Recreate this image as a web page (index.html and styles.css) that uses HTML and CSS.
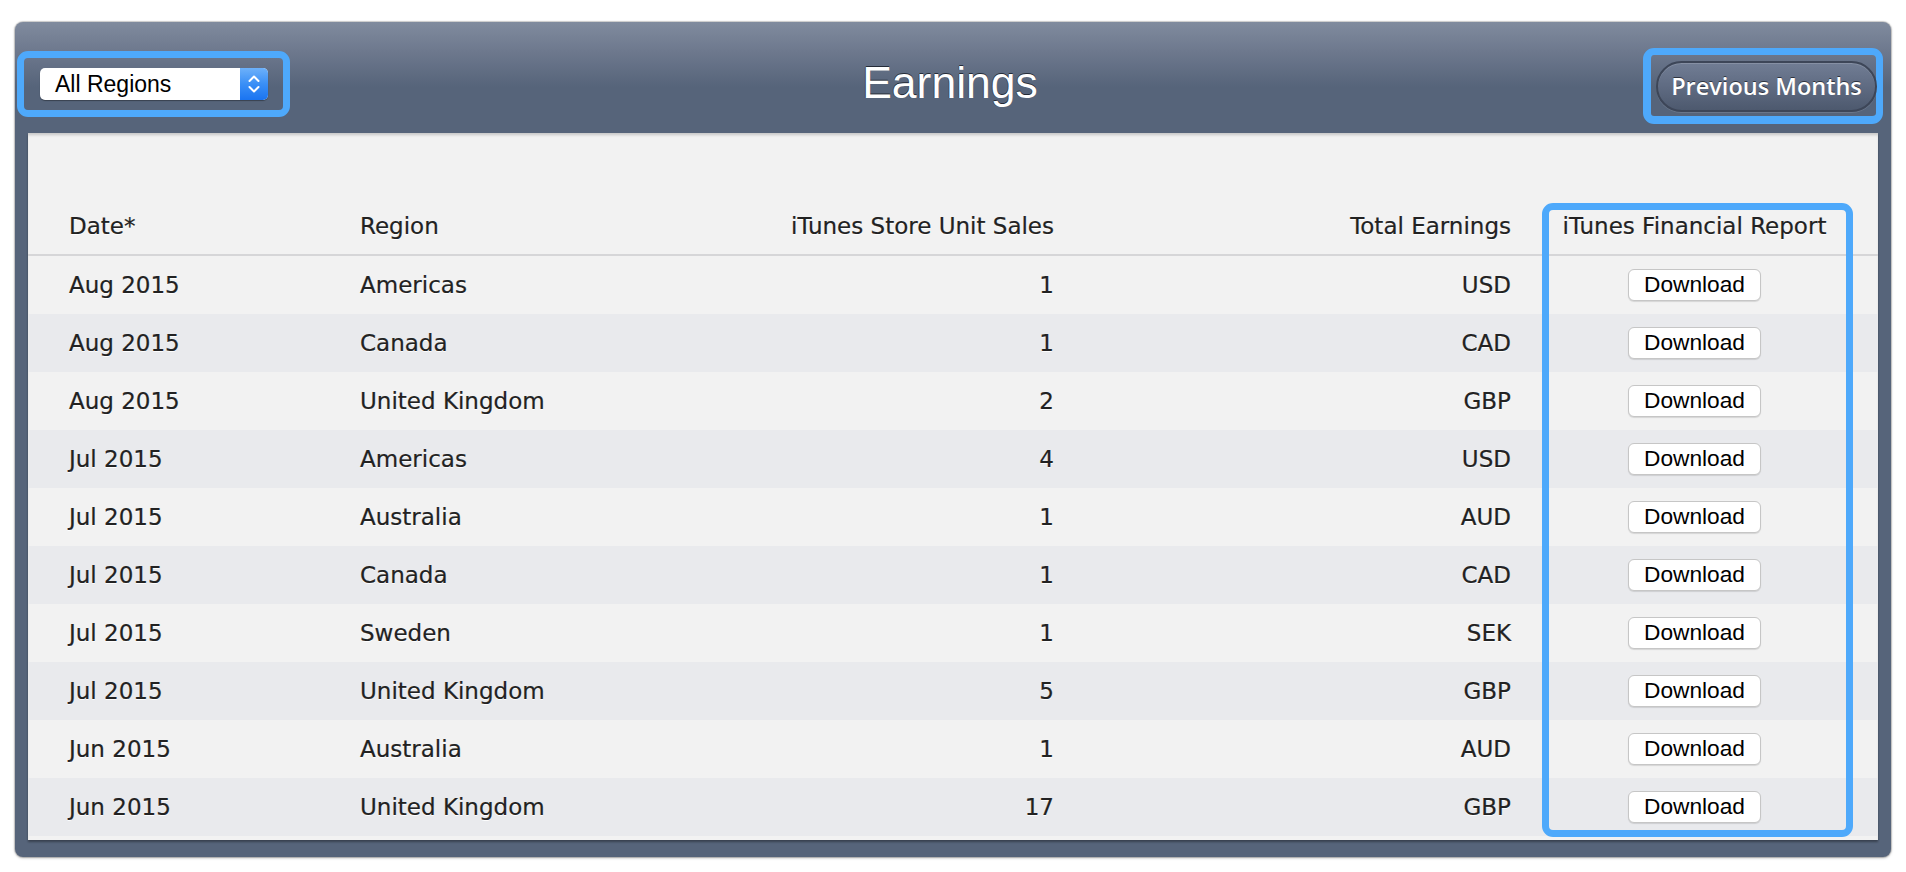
FILE: index.html
```html
<!DOCTYPE html>
<html>
<head>
<meta charset="utf-8">
<title>Earnings</title>
<link rel="stylesheet" href="styles.css">
</head>
<body>
<div class="window">
  <header class="topbar">
    <div class="hl hl-left">
      <div class="select">
        <span class="select-label">All Regions</span>
        <span class="select-arrows">
          <svg width="14" height="22" viewBox="0 0 14 22"><path d="M2.5 8 L7 3.5 L11.5 8" fill="none" stroke="#fff" stroke-width="2" stroke-linecap="round" stroke-linejoin="round"/><path d="M2.5 14 L7 18.5 L11.5 14" fill="none" stroke="#fff" stroke-width="2" stroke-linecap="round" stroke-linejoin="round"/></svg>
        </span>
      </div>
    </div>
    <h1 class="title">Earnings</h1>
    <div class="right-slot">
      <div class="hl hl-right">
        <button class="pill">Previous Months</button>
      </div>
    </div>
  </header>
  <section class="panel">
    <div class="row head">
      <div class="c c-date">Date*</div>
      <div class="c c-region">Region</div>
      <div class="c c-num">iTunes Store Unit Sales</div>
      <div class="c c-num">Total Earnings</div>
      <div class="c c-rep">iTunes Financial Report</div>
    </div>
    <div class="row"><div class="c c-date">Aug 2015</div><div class="c c-region">Americas</div><div class="c c-num">1</div><div class="c c-num">USD</div><div class="c c-rep"><button class="dl">Download</button></div></div>
    <div class="row"><div class="c c-date">Aug 2015</div><div class="c c-region">Canada</div><div class="c c-num">1</div><div class="c c-num">CAD</div><div class="c c-rep"><button class="dl">Download</button></div></div>
    <div class="row"><div class="c c-date">Aug 2015</div><div class="c c-region">United Kingdom</div><div class="c c-num">2</div><div class="c c-num">GBP</div><div class="c c-rep"><button class="dl">Download</button></div></div>
    <div class="row"><div class="c c-date">Jul 2015</div><div class="c c-region">Americas</div><div class="c c-num">4</div><div class="c c-num">USD</div><div class="c c-rep"><button class="dl">Download</button></div></div>
    <div class="row"><div class="c c-date">Jul 2015</div><div class="c c-region">Australia</div><div class="c c-num">1</div><div class="c c-num">AUD</div><div class="c c-rep"><button class="dl">Download</button></div></div>
    <div class="row"><div class="c c-date">Jul 2015</div><div class="c c-region">Canada</div><div class="c c-num">1</div><div class="c c-num">CAD</div><div class="c c-rep"><button class="dl">Download</button></div></div>
    <div class="row"><div class="c c-date">Jul 2015</div><div class="c c-region">Sweden</div><div class="c c-num">1</div><div class="c c-num">SEK</div><div class="c c-rep"><button class="dl">Download</button></div></div>
    <div class="row"><div class="c c-date">Jul 2015</div><div class="c c-region">United Kingdom</div><div class="c c-num">5</div><div class="c c-num">GBP</div><div class="c c-rep"><button class="dl">Download</button></div></div>
    <div class="row"><div class="c c-date">Jun 2015</div><div class="c c-region">Australia</div><div class="c c-num">1</div><div class="c c-num">AUD</div><div class="c c-rep"><button class="dl">Download</button></div></div>
    <div class="row"><div class="c c-date">Jun 2015</div><div class="c c-region">United Kingdom</div><div class="c c-num">17</div><div class="c c-num">GBP</div><div class="c c-rep"><button class="dl">Download</button></div></div>
    <div class="hl-report"></div>
  </section>
</div>
</body>
</html>
```

FILE: styles.css
```css
html, body {
  margin: 0;
  padding: 0;
  background: #ffffff;
}

body {
  font-family: "DejaVu Sans", "Liberation Sans", sans-serif;
}

.window {
  margin: 22px 15px 15px 15px;
  background: #56647a;
  border-radius: 8px;
  padding: 0 13px 17px 13px;
  box-shadow: 0 0 1px 1px rgba(0, 0, 0, 0.18), 0 1px 3px rgba(0, 0, 0, 0.25);
  background-image: linear-gradient(to bottom, #808b9e 0px, #6d788d 30px, #56647a 65px, #56647a 100%);
  background-repeat: no-repeat;
}

.topbar {
  display: grid;
  grid-template-columns: 1fr auto 1fr;
  align-items: start;
  height: 111px;
  box-sizing: border-box;
  padding-top: 26px;
  margin: 0 -5px 0 -11px;
}

.hl {
  border: 7px solid #4ea9fb;
  border-radius: 11px;
  box-sizing: border-box;
}

.hl-left {
  justify-self: start;
  margin-top: 3px;
  width: 273px;
  height: 66px;
  padding: 10px 15px 10px 16px;
}

.select {
  display: flex;
  height: 32px;
  border-radius: 5px;
  background: #ffffff;
  box-shadow: 0 1px 1px rgba(0, 0, 0, 0.35);
  overflow: hidden;
}

.select-label {
  flex: 1;
  font-family: "Liberation Sans", Arial, sans-serif;
  font-size: 23px;
  line-height: 33px;
  color: #000;
  padding-left: 15px;
}

.select-arrows {
  width: 28px;
  display: flex;
  align-items: center;
  justify-content: center;
  background: linear-gradient(to bottom, #6db1fa 0%, #3a8ff6 50%, #1a74f1 100%);
}

.title {
  margin: 10px 0 0 0;
  font-family: "Liberation Sans", Arial, sans-serif;
  font-weight: normal;
  font-size: 44.5px;
  line-height: 50px;
  color: #ffffff;
  text-shadow: 0 -1px 0 rgba(20, 25, 35, 0.8), -1px 0 0 rgba(20, 25, 35, 0.4);
}

.right-slot {
  display: flex;
  justify-content: flex-end;
}

.hl-right {
  width: 240px;
  height: 76px;
  padding: 6px 0 0 5px;
  border-width: 7px 7px 8px 8px;
}

.pill {
  display: block;
  width: 221px;
  height: 51px;
  margin: 0;
  border-radius: 26px;
  border: 2px solid #3d4658;
  background: linear-gradient(to bottom, #717d94 0%, #5f6b82 50%, #4d596e 100%);
  box-shadow: inset 0 1px 0 rgba(255, 255, 255, 0.15), 0 1px 0 rgba(255, 255, 255, 0.12);
  color: #ffffff;
  font-family: "Open Sans", "DejaVu Sans", sans-serif;
  font-weight: 600;
  font-size: 23.5px;
  padding: 0 0 2px 0;
  text-shadow: 0 -1px 0 rgba(0, 0, 0, 0.55);
}

.panel {
  position: relative;
  background: #f2f2f2;
  padding-bottom: 4px;
  box-shadow: inset 0 3px 3px -1px rgba(0, 0, 0, 0.18), 0 2px 2px rgba(0, 0, 0, 0.35);
}

.row {
  display: grid;
  grid-template-columns: 291px 400px 294px 457px 1fr;
  align-items: center;
  height: 58px;
  padding-left: 41px;
  font-size: 23px;
  line-height: 27px;
  color: #222222;
  text-shadow: 0 1px 0 rgba(255, 255, 255, 0.95);
  -webkit-text-stroke: 0.2px #222222;
}

.row:nth-child(odd) {
  background: #e9eaed;
}

.row.head {
  align-items: end;
  padding-bottom: 14px;
  box-sizing: border-box;
  border-bottom: 2px solid #d6d6d8;
  background: transparent;
  height: 123px;
}

.c-num {
  text-align: right;
}

.c-rep {
  text-align: center;
}

.dl {
  width: 133px;
  height: 32px;
  margin: 0;
  padding: 0 0 1px 0;
  background: #ffffff;
  border: 1px solid #c6c6c6;
  border-radius: 6px;
  box-shadow: 0 1px 1px rgba(0, 0, 0, 0.12);
  font-family: "Liberation Sans", Arial, sans-serif;
  font-size: 22.7px;
  color: #000;
  text-shadow: none;
  -webkit-text-stroke: 0;
  vertical-align: middle;
}

.hl-report {
  position: absolute;
  left: 1514px;
  top: 70px;
  width: 311px;
  height: 634px;
  box-sizing: border-box;
  border: 7px solid #4ea9fb;
  border-radius: 11px;
  pointer-events: none;
}
```
